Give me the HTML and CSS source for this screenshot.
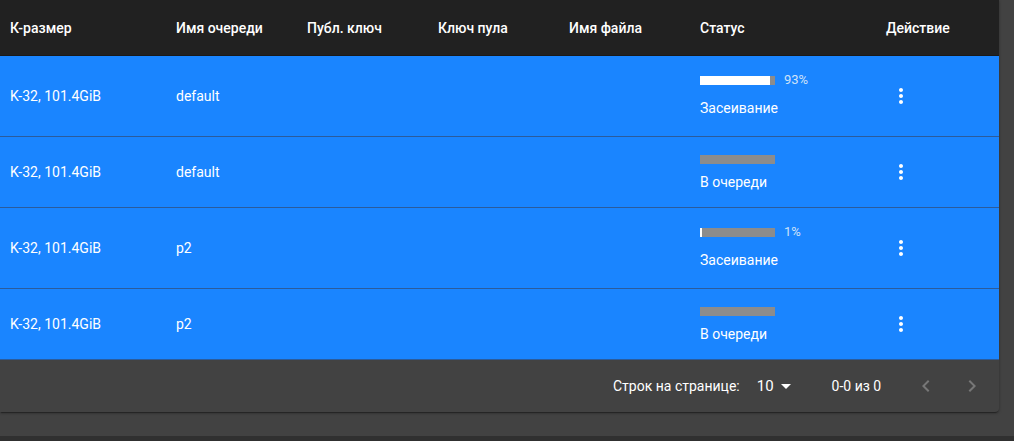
FILE: index.html
```html
<!DOCTYPE html>
<html lang="ru">
<head>
  <meta charset="UTF-8" />
  <title>Очередь</title>
  <link rel="stylesheet" href="styles.css">
</head>
<body>
  <div class="page">
    <div class="table-card">
      <div class="row head">
        <div class="cell">К-размер</div>
        <div class="cell">Имя очереди</div>
        <div class="cell">Публ. ключ</div>
        <div class="cell">Ключ пула</div>
        <div class="cell">Имя файла</div>
        <div class="cell">Статус</div>
        <div class="cell">Действие</div>
      </div>

      <div class="row tall">
        <div class="cell">K-32, 101.4GiB</div>
        <div class="cell">default</div>
        <div class="cell"></div>
        <div class="cell"></div>
        <div class="cell"></div>
        <div class="cell status">
          <div class="progress-line">
            <div class="bar"><div class="fill" style="width: 93%"></div></div>
            <span class="pct">93%</span>
          </div>
          <div>Засеивание</div>
        </div>
        <div class="cell"><button class="more"><svg width="24" height="24" viewBox="0 0 24 24"><path fill="#fff" d="M12 8c1.1 0 2-.9 2-2s-.9-2-2-2-2 .9-2 2 .9 2 2 2zm0 2c-1.1 0-2 .9-2 2s.9 2 2 2 2-.9 2-2-.9-2-2-2zm0 6c-1.1 0-2 .9-2 2s.9 2 2 2 2-.9 2-2-.9-2-2-2z"/></svg></button></div>
      </div>

      <div class="row">
        <div class="cell">K-32, 101.4GiB</div>
        <div class="cell">default</div>
        <div class="cell"></div>
        <div class="cell"></div>
        <div class="cell"></div>
        <div class="cell status">
          <div class="progress-line">
            <div class="bar"></div>
          </div>
          <div>В очереди</div>
        </div>
        <div class="cell"><button class="more"><svg width="24" height="24" viewBox="0 0 24 24"><path fill="#fff" d="M12 8c1.1 0 2-.9 2-2s-.9-2-2-2-2 .9-2 2 .9 2 2 2zm0 2c-1.1 0-2 .9-2 2s.9 2 2 2 2-.9 2-2-.9-2-2-2zm0 6c-1.1 0-2 .9-2 2s.9 2 2 2 2-.9 2-2-.9-2-2-2z"/></svg></button></div>
      </div>

      <div class="row tall">
        <div class="cell">K-32, 101.4GiB</div>
        <div class="cell">p2</div>
        <div class="cell"></div>
        <div class="cell"></div>
        <div class="cell"></div>
        <div class="cell status">
          <div class="progress-line">
            <div class="bar"><div class="fill" style="width: 2%"></div></div>
            <span class="pct">1%</span>
          </div>
          <div>Засеивание</div>
        </div>
        <div class="cell"><button class="more"><svg width="24" height="24" viewBox="0 0 24 24"><path fill="#fff" d="M12 8c1.1 0 2-.9 2-2s-.9-2-2-2-2 .9-2 2 .9 2 2 2zm0 2c-1.1 0-2 .9-2 2s.9 2 2 2 2-.9 2-2-.9-2-2-2zm0 6c-1.1 0-2 .9-2 2s.9 2 2 2 2-.9 2-2-.9-2-2-2z"/></svg></button></div>
      </div>

      <div class="row">
        <div class="cell">K-32, 101.4GiB</div>
        <div class="cell">p2</div>
        <div class="cell"></div>
        <div class="cell"></div>
        <div class="cell"></div>
        <div class="cell status">
          <div class="progress-line">
            <div class="bar"></div>
          </div>
          <div>В очереди</div>
        </div>
        <div class="cell"><button class="more"><svg width="24" height="24" viewBox="0 0 24 24"><path fill="#fff" d="M12 8c1.1 0 2-.9 2-2s-.9-2-2-2-2 .9-2 2 .9 2 2 2zm0 2c-1.1 0-2 .9-2 2s.9 2 2 2 2-.9 2-2-.9-2-2-2zm0 6c-1.1 0-2 .9-2 2s.9 2 2 2 2-.9 2-2-.9-2-2-2z"/></svg></button></div>
      </div>

      <div class="pager">
        <span>Строк на странице:</span>
        <span class="per-page">10
          <svg width="24" height="24" viewBox="0 0 24 24"><path fill="#fff" d="M7 10l5 5 5-5z"/></svg>
        </span>
        <span class="range">0-0 из 0</span>
        <svg class="nav" width="24" height="24" viewBox="0 0 24 24"><path fill="#777" d="M15.41 7.41L14 6l-6 6 6 6 1.41-1.41L10.83 12z"/></svg>
        <svg class="nav" width="24" height="24" viewBox="0 0 24 24"><path fill="#777" d="M10 6L8.59 7.41 13.17 12l-4.58 4.59L10 18l6-6z"/></svg>
      </div>
    </div>
  </div>
</body>
</html>
```

FILE: styles.css
```css
body {
  margin: 0;
  font-family: Roboto, 'Noto Sans', sans-serif;
  background: #303030;
  color: white;
  font-size: 14px;
}

.page {
  width: 1014px;
  height: 436px;
  background: #424242;
}

.table-card {
  width: 999px;
  background: #424242;
  border-radius: 0 0 4px 0;
  box-shadow: 0 2px 1px -1px rgba(0,0,0,0.3), 0 1px 3px rgba(0,0,0,0.35);
}

.row {
  display: grid;
  grid-template-columns: 166px 131px 131px 131px 131px 186px 123px;
  height: 70px;
  background: #1a85ff;
  border-bottom: 1px solid #2b5c9c;
}

.row.tall {
  height: 80px;
}

.row.head {
  height: 55px;
  background: #212121;
  border-bottom: 1px solid #1a1a1a;
  font-weight: 500;
}

.cell {
  padding-left: 10px;
  display: flex;
  align-items: center;
}

.status {
  flex-direction: column;
  align-items: flex-start;
  justify-content: center;
  gap: 10px;
}

.tall .status {
  gap: 15px;
}

.progress-line {
  display: flex;
  align-items: center;
  height: 9px;
}

.bar {
  width: 75px;
  height: 9px;
  background: #8c8c8c;
}

.fill {
  height: 100%;
  background: white;
}

.pct {
  margin-left: 9px;
  font-size: 13px;
  color: #cfe2f8;
  margin-top: -3px;
}

.more {
  background: none;
  border: none;
  padding: 0;
  margin-left: 3px;
  display: flex;
}

.pager {
  display: flex;
  align-items: center;
  height: 52px;
  padding-left: 613px;
  color: white;
  font-size: 14px;
}

.per-page {
  display: flex;
  align-items: center;
  margin-left: 17px;
  font-size: 15px;
}

.range {
  margin-left: 34px;
}

.nav {
  margin-left: 33px;
}

.nav + .nav {
  margin-left: 22px;
}
```
